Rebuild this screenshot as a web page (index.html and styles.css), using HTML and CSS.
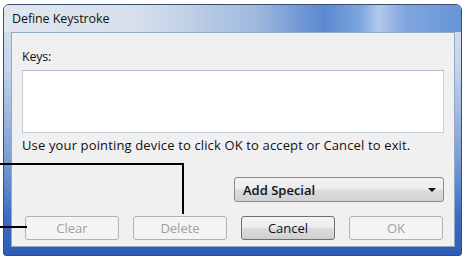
FILE: index.html
```html
<!DOCTYPE html>
<html>
<head>
<meta charset="utf-8">
<link rel="stylesheet" href="styles.css">
</head>
<body>
<div class="stage">
  <div class="window">
    <div class="titlebar">Define Keystroke</div>
    <div class="client">
      <div class="label">Keys:</div>
      <div class="keysbox"></div>
      <div class="hint">Use your pointing device to click OK to accept or Cancel to exit.</div>
      <div class="droprow">
        <div class="dropdown"><span>Add Special</span><span class="arrow"></span></div>
      </div>
      <div class="buttons">
        <div class="btn disabled">Clear</div>
        <div class="btn disabled">Delete</div>
        <div class="btn">Cancel</div>
        <div class="btn disabled">OK</div>
      </div>
    </div>
  </div>
  <div class="line line-h1"></div>
  <div class="line line-v1"></div>
  <div class="line line-h2"></div>
</div>
</body>
</html>
```
FILE: styles.css
```css
html, body {
  margin: 0;
  padding: 0;
  background: #ffffff;
  width: 465px;
  height: 259px;
  overflow: hidden;
}
.stage {
  position: relative;
  width: 465px;
  height: 259px;
  padding: 4px 0 0 3px;
  box-sizing: border-box;
  font-family: "Open Sans", "Noto Sans", sans-serif;
}
.window {
  width: 459px;
  height: 252px;
  box-sizing: border-box;
  border: 1px solid #3a4f6b;
  border-radius: 6px 6px 3px 3px;
  background: linear-gradient(180deg, #dbe4ef 0%, #c4d4ea 25%, #7ea0d6 60%, #3c6cc2 85%, #2f5db3 100%);
  padding: 0 6px 8px 7px;
  display: flex;
  flex-direction: column;
}
.titlebar {
  height: 27px;
  margin: 0 -6px 0 -7px;
  padding: 0 0 0 8px;
  border-radius: 5px 5px 0 0;
  background: linear-gradient(90deg, #dfe6ef 0%, #d5dfeb 30%, #9fb9df 55%, #5a88d0 70%, #7ea6dd 78%, #b2c9ea 82%, #7ea5dd 88%, #6895d8 100%);
  font-size: 12.5px;
  line-height: 27px;
  color: #111;
  letter-spacing: -0.1px;
}
.client {
  flex: 1;
  background: #f0f0f0;
  border: 1px solid #93a9c6;
  padding: 16px 10px 0 10px;
  display: flex;
  flex-direction: column;
}
.label {
  font-size: 12.5px;
  line-height: 16px;
  color: #111;
  letter-spacing: -0.2px;
}
.keysbox {
  margin-top: 5px;
  height: 63px;
  width: 422px;
  box-sizing: border-box;
  background: #ffffff;
  border: 1px solid #c5cfdc;
  border-top-color: #abb9cc;
}
.hint {
  margin-top: 4px;
  font-size: 13px;
  line-height: 17px;
  color: #111;
  letter-spacing: 0.14px;
}
.droprow {
  margin-top: 23px;
  display: flex;
  justify-content: flex-end;
}
.dropdown {
  width: 210px;
  height: 25px;
  box-sizing: border-box;
  border: 1px solid #8a8a8a;
  border-radius: 3px;
  background: linear-gradient(180deg, #f4f4f4 0%, #ececec 48%, #dcdcdc 52%, #d2d2d2 100%);
  display: flex;
  align-items: center;
  justify-content: space-between;
  padding: 0 7px 0 8px;
  font-size: 13px;
  font-weight: 600;
  color: #111;
}
.arrow {
  width: 0;
  height: 0;
  border-left: 4px solid transparent;
  border-right: 4px solid transparent;
  border-top: 4px solid #111;
}
.buttons {
  margin-top: 14px;
  display: flex;
  gap: 14px;
  padding-left: 3px;
}
.btn {
  width: 94px;
  height: 24px;
  box-sizing: border-box;
  border: 1px solid #707070;
  border-radius: 3px;
  background: linear-gradient(180deg, #f3f3f3 0%, #ebebeb 48%, #dddddd 52%, #cfcfcf 100%);
  font-size: 13px;
  line-height: 22px;
  text-align: center;
  color: #111;
}
.btn.disabled {
  border-color: #adb2b5;
  background: #f4f4f4;
  color: #a0a0a0;
}
.line {
  position: absolute;
  background: #000;
}
.line-h1 {
  left: 0;
  top: 163px;
  width: 184px;
  height: 2px;
}
.line-v1 {
  left: 182px;
  top: 163px;
  width: 2px;
  height: 51px;
}
.line-h2 {
  left: 0;
  top: 226px;
  width: 27px;
  height: 2px;
}
```
